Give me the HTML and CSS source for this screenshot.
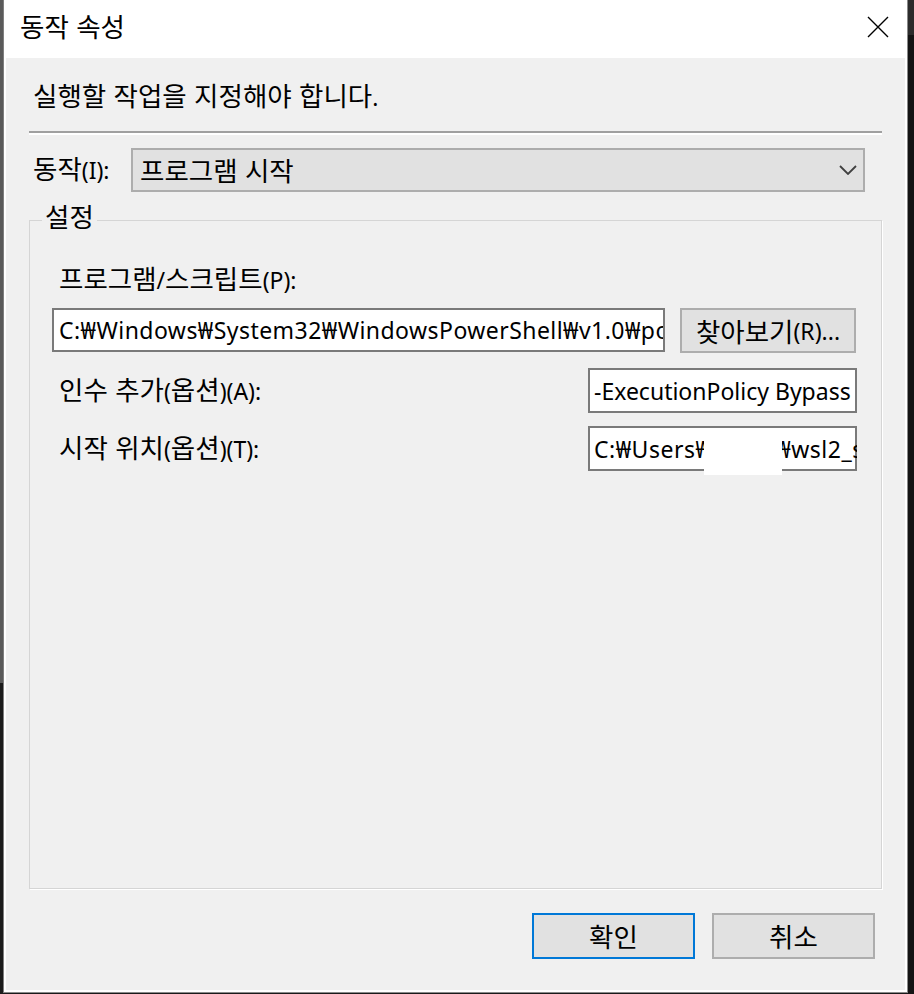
FILE: index.html
```html
<!DOCTYPE html>
<html lang="ko">
<head>
<meta charset="utf-8">
<title>동작 속성</title>
<link rel="stylesheet" href="styles.css">
</head>
<body>
<div class="screen">
  <div class="edge-left"></div>
  <div class="dialog">
    <div class="titlebar">
      <span class="title"><span class="ko">동작 속성</span></span>
      <svg class="close" width="22" height="22" viewBox="0 0 22 22"><path d="M1 1 L21 21 M21 1 L1 21" stroke="#000" stroke-width="1.4" fill="none"/></svg>
    </div>
    <div class="body">
      <p class="intro"><span class="ko">실행할 작업을 지정해야 합니다</span>.</p>
      <div class="sep"></div>
      <div class="action-row">
        <span class="action-label"><span class="ko">동작</span>(I):</span>
        <div class="select">
          <span class="ko">프로그램 시작</span>
          <svg class="chevron" width="18" height="10" viewBox="0 0 18 10"><path d="M1 1 L9 9 L17 1" stroke="#404040" stroke-width="1.8" fill="none"/></svg>
        </div>
      </div>
      <fieldset class="group">
        <legend><span class="ko">설정</span></legend>
        <div class="group-body">
          <div class="field-label"><span class="ko">프로그램</span>/<span class="ko">스크립트</span>(P):</div>
          <div class="program-row">
            <div class="textbox program">C:₩Windows₩System32₩WindowsPowerShell₩v1.0₩powershell.exe</div>
            <div class="btn browse"><span class="ko">찾아보기</span>(R)...</div>
          </div>
          <div class="arg-row">
            <span class="row-label"><span class="ko">인수 추가</span>(<span class="ko">옵션</span>)(A):</span>
            <div class="textbox short">-ExecutionPolicy Bypass -File</div>
          </div>
          <div class="arg-row">
            <span class="row-label"><span class="ko">시작 위치</span>(<span class="ko">옵션</span>)(T):</span>
            <div class="textbox short start">C:₩Users₩<span class="hidden-name"></span>₩wsl2_startup<span class="redact"></span></div>
          </div>
        </div>
      </fieldset>
      <div class="buttons">
        <div class="btn ok"><span class="ko">확인</span></div>
        <div class="btn"><span class="ko">취소</span></div>
      </div>
    </div>
  </div>
  <div class="edge-right"></div>
</div>
</body>
</html>
```

FILE: styles.css
```css
* { box-sizing: border-box; }
html, body { margin: 0; padding: 0; }
body {
  font-family: "Noto Sans", "Noto Sans CJK KR", sans-serif;
  font-size: 23px;
  color: #000;
  background: #1a1a1a;
}
.ko {
  font-family: "Noto Sans CJK KR", sans-serif;
  font-size: 26.5px;
  line-height: 20px;
}
.screen {
  display: flex;
  width: 914px;
  height: 994px;
  overflow: hidden;
  background: #1a1a1a;
}
.edge-left {
  width: 3px;
  flex: none;
  background: linear-gradient(#5a5a5a 0 683px, #1c1c1c 683px);
}
.edge-right {
  width: 6px;
  flex: none;
  background: linear-gradient(#2c2c2c 0 35px, #141414 35px);
}
.dialog {
  flex: 1;
  height: 993px;
  display: flex;
  flex-direction: column;
  background: #fff;
  border-left: 1px solid #7f7f7f;
  border-right: 1px solid #8a8a8a;
  border-bottom: 1px solid #8a8a8a;
  padding: 0 2px 2px 2px;
}
.titlebar {
  height: 58px;
  flex: none;
  display: flex;
  align-items: center;
  justify-content: space-between;
  padding: 0 16px 0 14px;
}
.title { line-height: 30px; margin-top: -3px; }
.close { display: block; margin-top: -4px; }
.body {
  flex: 1;
  background: #f0f0f0;
  padding: 0 23px;
  display: flex;
  flex-direction: column;
}
.intro {
  margin: 24px 0 0 4px;
  line-height: 30px;
}
.sep {
  margin-top: 19px;
  height: 0;
  border-top: 2px solid #a0a0a0;
  border-bottom: 2px solid #fff;
}
.action-row {
  margin-top: 13px;
  display: flex;
  align-items: center;
  padding-left: 4px;
}
.action-label { width: 98px; flex: none; line-height: 30px; }
.select {
  flex: 1;
  margin-right: 17px;
  height: 44px;
  background: #e1e1e1;
  border: 2px solid #adadad;
  display: flex;
  align-items: center;
  justify-content: space-between;
  padding: 0 6px 0 7px;
  line-height: 30px;
}
.chevron { display: block; }
.group {
  flex: 1;
  margin: 13px 0 0 0;
  padding: 0;
  min-width: 0;
  border: 1px solid #d5d5d5;
  box-shadow: 1px 1px 0 #fff;
}
.group legend {
  margin-left: 12px;
  padding: 0 3px 4px 3px;
  line-height: 26px;
}
.group-body {
  padding: 0 24px 0 22px;
}
.field-label {
  margin: 30px 0 0 7px;
  line-height: 30px;
}
.program-row {
  margin-top: 13px;
  display: flex;
  align-items: flex-start;
}
.textbox {
  background: #fff;
  border: 2px solid #7a7a7a;
  height: 45px;
  white-space: nowrap;
  overflow: hidden;
  display: flex;
  align-items: center;
  line-height: 30px;
}
.program {
  width: 613px;
  height: 44px;
  padding: 0 5px;
  letter-spacing: 0.45px;
}
.btn {
  background: #e1e1e1;
  border: 2px solid #adadad;
  display: flex;
  align-items: center;
  justify-content: center;
  line-height: 30px;
}
.browse {
  width: 176px;
  height: 45px;
  margin-left: 15px;
}
.arg-row {
  margin-top: 15px;
  display: flex;
  align-items: center;
}
.arg-row + .arg-row { margin-top: 13px; }
.row-label { margin-left: 7px; line-height: 30px; }
.short {
  margin-left: auto;
  width: 269px;
  padding: 0 4px;
}
.start {
  position: relative;
  overflow: visible;
  clip-path: inset(0 0 -4px 0);
  letter-spacing: 0.5px;
}
.hidden-name { display: inline-block; width: 64px; flex: none; }
.redact {
  position: absolute;
  left: 114px;
  top: 9px;
  width: 78px;
  height: 38px;
  background: #fff;
}
.buttons {
  display: flex;
  justify-content: flex-end;
  gap: 17px;
  margin: 24px 7px 31px 0;
}
.buttons .btn {
  width: 163px;
  height: 46px;
}
.btn.ok { border-color: #0078d7; }
```
